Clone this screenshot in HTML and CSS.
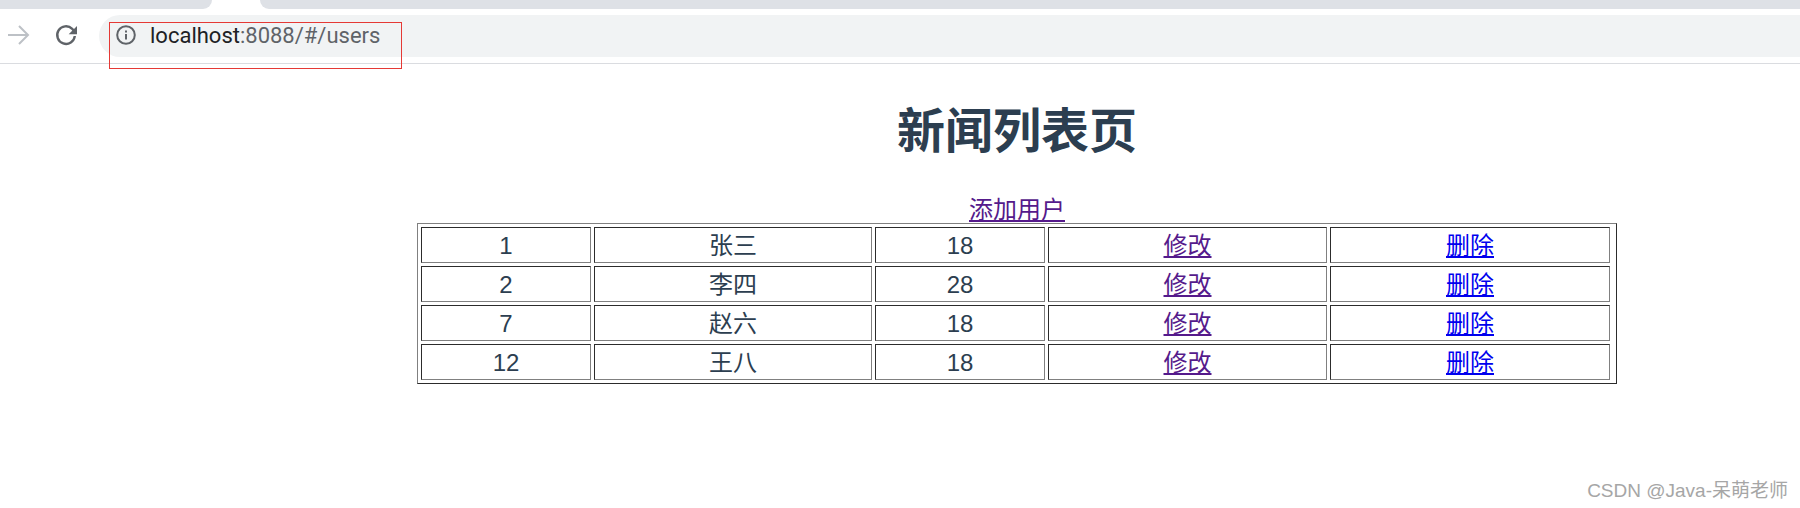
FILE: index.html
```html
<!DOCTYPE html>
<html lang="zh-CN">
<head>
    <meta charset="UTF-8">
    <title>新闻列表页</title>
    <link rel="stylesheet" href="styles.css">
</head>
<body>

<div class="tabstrip">
    <div class="tab tab-left"></div>
    <div class="tab-gap"></div>
    <div class="tab tab-right"></div>
</div>

<div class="toolbar">
    <svg class="nav-icon forward" width="24" height="24" viewBox="0 0 24 24">
        <path d="M2 12h19M13 3l9 9-9 9" fill="none" stroke="#bdc1c6" stroke-width="2"/>
    </svg>
    <svg class="nav-icon reload" width="24" height="24" viewBox="0 0 24 24">
        <path d="M20.800 13A8.800 8.800 0 1 1 18.200 5.800L20 8" fill="none" stroke="#5f6368" stroke-width="2.400"/>
        <path d="M23 3v8.300h-8.300z" fill="#5f6368"/>
    </svg>
    <div class="omnibox">
        <svg class="info-icon" width="20" height="20" viewBox="0 0 20 20">
            <circle cx="10" cy="10" r="8.800" fill="none" stroke="#5f6368" stroke-width="2"/>
            <rect x="9" y="9" width="2" height="5.500" fill="#5f6368"/>
            <rect x="9" y="5.500" width="2" height="2" fill="#5f6368"/>
        </svg>
        <span class="url"><span class="host">localhost</span>:8088/#/users</span>
    </div>
</div>

<div class="url-mark"></div>

<div class="app">
    <h1>新闻列表页</h1>
    <a class="add-link" href="#">添加用户</a>
    <table class="users">
        <colgroup>
            <col class="col-id">
            <col class="col-name">
            <col class="col-age">
            <col class="col-edit">
            <col class="col-del">
        </colgroup>
        <tr><td>1</td><td>张三</td><td>18</td><td><a class="visited" href="#">修改</a></td><td><a href="#">删除</a></td></tr>
        <tr><td>2</td><td>李四</td><td>28</td><td><a class="visited" href="#">修改</a></td><td><a href="#">删除</a></td></tr>
        <tr><td>7</td><td>赵六</td><td>18</td><td><a class="visited" href="#">修改</a></td><td><a href="#">删除</a></td></tr>
        <tr><td>12</td><td>王八</td><td>18</td><td><a class="visited" href="#">修改</a></td><td><a href="#">删除</a></td></tr>
    </table>
</div>

<div class="watermark">CSDN @Java-呆萌老师</div>

</body>
</html>
```

FILE: styles.css
```css
body { margin: 0; height: 508px; overflow: hidden; background-color: #fff; font-family: "Liberation Sans", "Noto Sans CJK SC", sans-serif; color: #2c3e50; position: relative; }

.tabstrip { display: flex; height: 9px; background-color: #fff; }
.tab { background-color: #dee1e6; height: 9px; }
.tab-left { width: 212px; border-bottom-right-radius: 10px; }
.tab-gap { width: 48px; }
.tab-right { flex: 1; border-bottom-left-radius: 10px; }

.toolbar { display: flex; align-items: center; height: 54px; border-bottom: 1px solid #dadce0; }
.nav-icon { flex: none; margin-bottom: 2px; }
.forward { margin-left: 6px; }
.reload { margin-left: 24px; }
.omnibox { display: flex; align-items: center; flex: 1; height: 42px; margin-left: 21px; padding-left: 17px; background-color: #f1f3f4; border-radius: 21px 0 0 21px; }
.info-icon { flex: none; margin-bottom: 2px; }
.url { margin-left: 14px; margin-bottom: 2px; font-family: "Roboto", sans-serif; font-size: 22px; color: #5f6368; }
.host { color: #202124; }

.url-mark { position: absolute; left: 109px; top: 22px; width: 291px; height: 45px; border: 1px solid #e53935; }

.app { margin-left: 234px; text-align: center; }
h1 { margin: 0; padding-top: 36px; font-size: 48px; line-height: 64px; font-weight: bold; }
.add-link { display: block; margin-top: 32px; font-size: 24px; line-height: 27px; }
a { color: #00e; }
a.visited, .add-link { color: #551a8b; }

.users { box-sizing: border-box; table-layout: fixed; width: 1200px; margin: 0 auto; padding-right: 3px; border-spacing: 3px; border: 1px solid; border-color: #808080 #2c2c2c #2c2c2c #808080; }
.col-id, .col-age { width: 170px; }
.col-name { width: 278px; }
.col-edit { width: 279px; }
.col-del { width: 280px; }
.users td { box-sizing: border-box; height: 36px; padding: 4px 1px 3px; border: 1px solid; border-color: #2c2c2c #808080 #808080 #2c2c2c; text-align: center; font-size: 24px; line-height: 27px; }

.watermark { position: absolute; right: 12px; bottom: 6px; font-size: 19px; color: #a6a6a6; }
```
